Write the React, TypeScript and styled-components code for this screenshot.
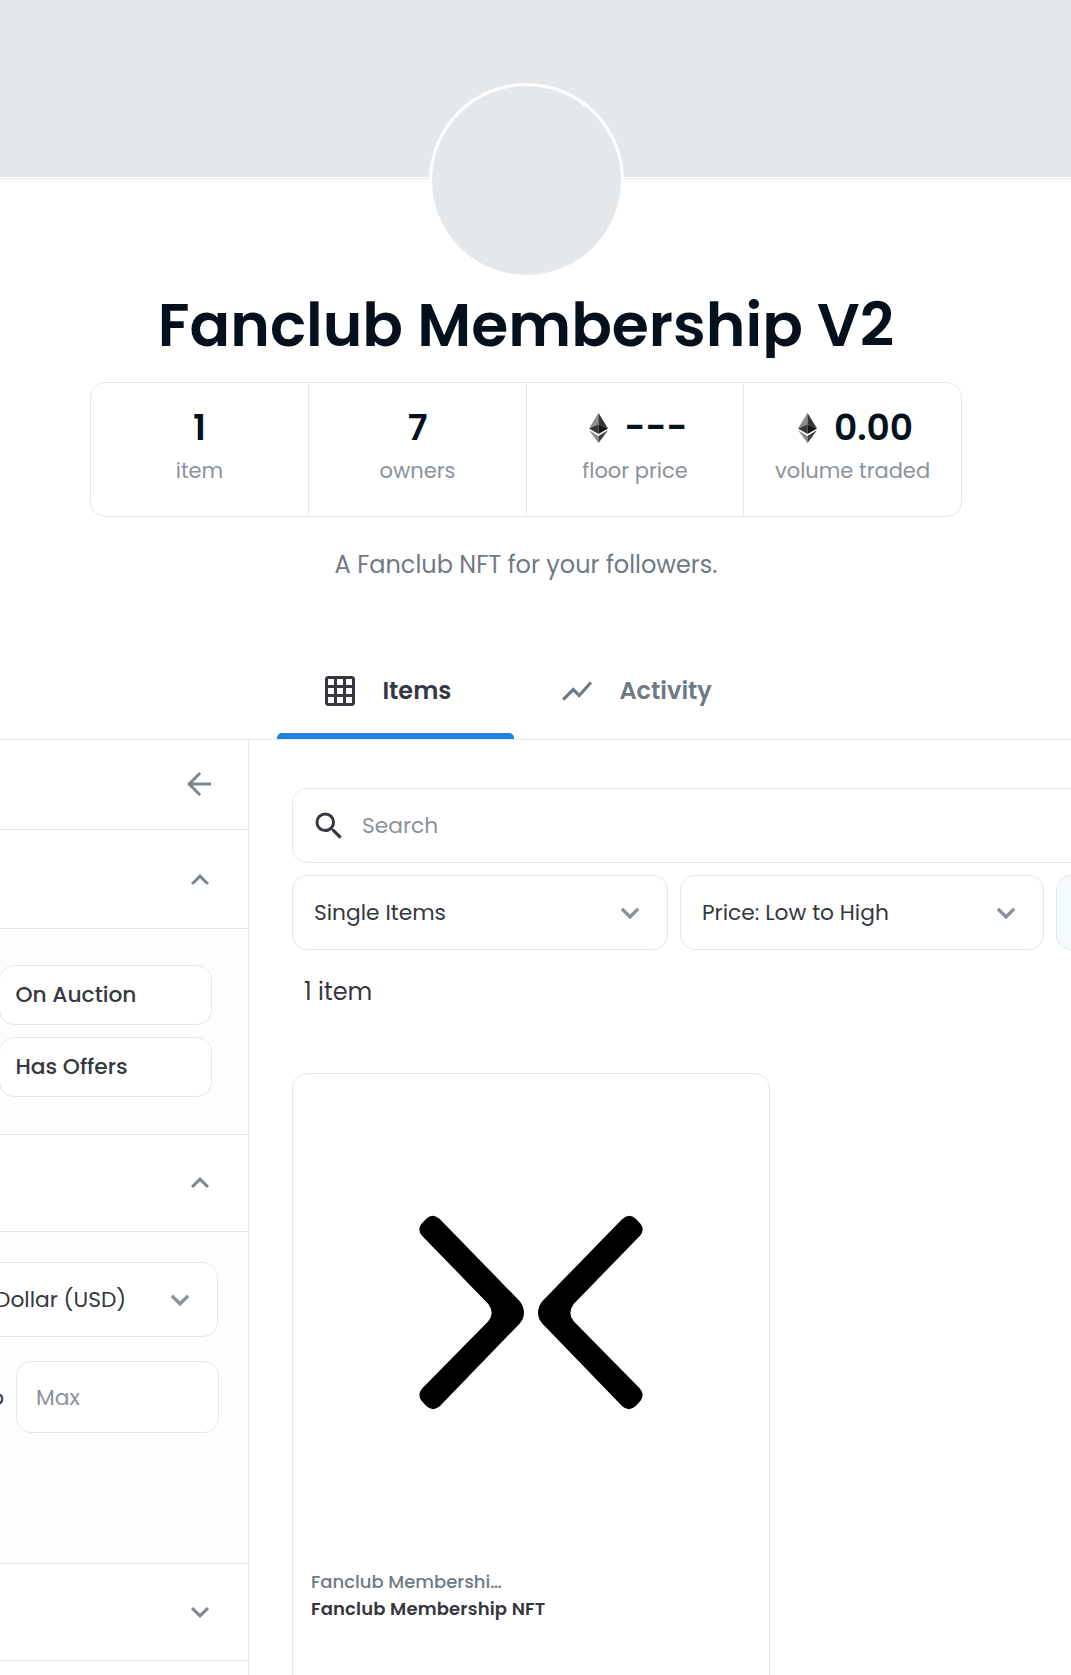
import React from "react";
import styled, { createGlobalStyle } from "styled-components";

const line = "#e5e8eb";
const ink = "#353840";
const navy = "#04111d";
const gray = "#707a83";
const softGray = "#8a939b";
const iconGray = "#7d868f";

const GlobalStyle = createGlobalStyle`
  *, *::before, *::after { box-sizing: border-box; }
  body {
    margin: 0;
    background: #fff;
    color: ${ink};
    font-family: Poppins, "Open Sans", sans-serif;
    overflow: hidden;
  }
`;

const Page = styled.div`
  height: 1675px;
  display: flex;
  flex-direction: column;
  overflow: hidden;
`;

const Banner = styled.div`
  flex: none;
  height: 179px;
  padding-bottom: 1px;
  border-bottom: 1px solid ${line};
  &::before {
    content: "";
    display: block;
    height: 100%;
    background: ${line};
  }
`;

const Header = styled.header`
  flex: none;
  width: 1052px;
  display: flex;
  flex-direction: column;
  align-items: center;
`;

const Avatar = styled.div`
  width: 195px;
  height: 195px;
  margin: -96px 0 0 1px;
  border: 3px solid #fff;
  border-radius: 50%;
  background: ${line};
  position: relative;
`;

const Title = styled.h1`
  margin: 14px 0 24px;
  font-size: 60px;
  font-weight: 600;
  line-height: 66px;
  color: ${navy};
  overflow: hidden;
`;

const Stats = styled.div`
  width: 872px;
  height: 135px;
  display: grid;
  grid-template-columns: 218px 218px 217px 1fr;
  border: 1px solid ${line};
  border-radius: 15px;
  padding-bottom: 1px;
`;

const Stat = styled.div`
  display: flex;
  flex-direction: column;
  align-items: center;
  padding-top: 18px;
  border-right: 1px solid ${line};
  &:last-child { border-right: 0; }
`;

const StatValue = styled.div`
  display: flex;
  align-items: center;
  gap: 17px;
  font-size: 36px;
  font-weight: 600;
  line-height: 54px;
  color: ${navy};
  svg { margin-left: 6px; }
`;

const StatLabel = styled.div`
  font-size: 21px;
  line-height: 32px;
  color: ${softGray};
`;

const Description = styled.p`
  margin: 30px 0 60px;
  font-size: 24px;
  line-height: 36px;
  color: ${gray};
`;

const Tabs = styled.nav`
  flex: none;
  height: 97px;
  padding-left: 277px;
  display: flex;
  border-bottom: 1px solid ${line};
`;

const Tab = styled.div<{ $active?: boolean }>`
  position: relative;
  width: 237px;
  padding-left: 45.4px;
  display: flex;
  align-items: center;
  gap: 24px;
  font-size: 24px;
  font-weight: 600;
  color: ${p => (p.$active ? ink : gray)};
  &::after {
    content: "";
    display: ${p => (p.$active ? "block" : "none")};
    position: absolute;
    left: 0;
    right: 0;
    bottom: 0;
    height: 6px;
    border-radius: 5px 5px 0 0;
    background: #2081e2;
  }
`;

const TabLabel = styled.span`
  margin-bottom: 2px;
`;

const Body = styled.div`
  flex: 1;
  min-height: 0;
  display: flex;
`;

const Sidebar = styled.aside`
  flex: none;
  width: 249px;
  border-right: 1px solid ${line};
  overflow: hidden;
`;

const SideRow = styled.div<{ $height: number; $pad?: string }>`
  height: ${p => p.$height}px;
  padding: ${p => p.$pad ?? "0 30px 0 0"};
  display: flex;
  align-items: center;
  justify-content: flex-end;
  border-bottom: 1px solid ${line};
  color: ${iconGray};
`;

const Panel = styled.div<{ $height: number; $top: number; $gap: number }>`
  height: ${p => p.$height}px;
  padding-top: ${p => p.$top}px;
  display: flex;
  flex-direction: column;
  gap: ${p => p.$gap}px;
  background: #fbfdff;
  border-bottom: 1px solid ${line};
`;

const StatusButton = styled.div`
  width: 213px;
  height: 60px;
  margin-left: -1px;
  padding: 0 0 2px 15.5px;
  display: flex;
  align-items: center;
  background: #fff;
  border: 1px solid ${line};
  border-radius: 15px;
  font-size: 21.75px;
  font-weight: 500;
`;

const Select = styled.div<{ $width: number; $offset?: number }>`
  flex: none;
  width: ${p => p.$width}px;
  height: 75px;
  margin-left: ${p => p.$offset ?? 0}px;
  padding: 0 19px 0 21px;
  display: flex;
  align-items: center;
  justify-content: space-between;
  background: #fff;
  border: 1px solid ${line};
  border-radius: 15px;
  font-size: 21.75px;
  white-space: nowrap;
  svg {
    color: ${softGray};
    stroke: ${softGray};
    stroke-width: 0.4px;
  }
`;

const PriceRow = styled.div`
  display: flex;
  align-items: center;
  margin-left: -18px;
`;

const To = styled.span`
  width: 34px;
  font-size: 22px;
`;

const Field = styled.div`
  width: 203px;
  height: 72px;
  padding-left: 19px;
  display: flex;
  align-items: center;
  background: #fff;
  border: 1px solid ${line};
  border-radius: 15px;
  font-size: 21.75px;
  color: ${softGray};
`;

const Main = styled.main`
  flex: 1;
  min-width: 0;
  padding: 48px 0 0 43px;
  overflow: hidden;
`;

const Search = styled.div`
  width: 900px;
  height: 75px;
  padding-left: 18px;
  display: flex;
  align-items: center;
  gap: 15px;
  border: 1px solid ${line};
  border-radius: 15px;
  font-size: 21.75px;
  color: ${softGray};
  svg { color: ${ink}; }
`;

const Filters = styled.div`
  margin-top: 12px;
  display: flex;
  gap: 12px;
`;

const ViewToggle = styled.div`
  flex: none;
  width: 140px;
  height: 75px;
  background: #f3fbfe;
  border: 1px solid ${line};
  border-radius: 15px;
`;

const Count = styled.div`
  margin: 24px 0 63px 12px;
  font-size: 24px;
  line-height: 36px;
`;

const Card = styled.article`
  width: 478px;
  height: 700px;
  border: 1px solid ${line};
  border-radius: 15px;
`;

const Art = styled.svg`
  display: block;
  width: 476px;
  height: 476px;
`;

const CardInfo = styled.div`
  padding: 18px 18px 0;
  font-size: 18px;
  line-height: 27px;
`;

const Collection = styled.div`
  font-weight: 500;
  color: ${gray};
`;

const ItemName = styled.div`
  font-weight: 600;
  letter-spacing: 0.15px;
`;

const paths = {
  grid: "M20 2H4c-1.1 0-2 .9-2 2v16c0 1.1.9 2 2 2h16c1.1 0 2-.9 2-2V4c0-1.1-.9-2-2-2zM8 20H4v-4h4v4zm0-6H4v-4h4v4zm0-6H4V4h4v4zm6 12h-4v-4h4v4zm0-6h-4v-4h4v4zm0-6h-4V4h4v4zm6 12h-4v-4h4v4zm0-6h-4v-4h4v4zm0-6h-4V4h4v4z",
  chart: "M3.5 18.49l6-6.01 4 4L22 6.92l-1.41-1.41-7.09 7.97-4-4L2 16.99z",
  back: "M20 11H7.83l5.59-5.59L12 4l-8 8 8 8 1.41-1.41L7.83 13H20v-2z",
  up: "M12 8l-6 6 1.41 1.41L12 10.83l4.59 4.58L18 14z",
  down: "M16.59 8.59L12 13.17 7.41 8.59 6 10l6 6 6-6z",
  search: "M15.5 14h-.79l-.28-.27A6.471 6.471 0 0 0 16 9.5 6.5 6.5 0 1 0 9.5 16c1.61 0 3.09-.59 4.23-1.57l.27.28v.79l5 4.99L20.49 19l-4.99-5zm-6 0C7.01 14 5 11.99 5 9.5S7.01 5 9.5 5 14 7.01 14 9.5 11.99 14 9.5 14z",
};

function Icon({ name }: { name: keyof typeof paths }) {
  return (
    <svg width="36" height="36" viewBox="0 0 24 24" fill="currentColor">
      <path d={paths[name]} />
    </svg>
  );
}

function Eth() {
  return (
    <svg width="19" height="30" viewBox="0 0 19 30">
      <path d="M9.5 0L0 15.5l9.5-4.3z" fill="#8c8c8c" />
      <path d="M9.5 0L19 15.5l-9.5-4.3z" fill="#343434" />
      <path d="M0 15.5l9.5-4.3V21z" fill="#393939" />
      <path d="M19 15.5l-9.5-4.3V21z" fill="#141414" />
      <path d="M0 17.3L9.5 23v7z" fill="#8c8c8c" />
      <path d="M19 17.3L9.5 23v7z" fill="#3c3c3b" />
    </svg>
  );
}

const chevron =
  "M147 145.3L226.3 226.7Q231 232 231 238.5T226.3 250L147 332Q140 338.5 133 331.7L128.3 326.5Q124 320.5 129.3 314.3L195.3 247.3Q202 238.7 195.3 230L129 161.7Q124 156 128.3 150L133 145Q140 138.2 147 145.3Z";

const stats = [
  { value: "1", label: "item" },
  { value: "7", label: "owners" },
  { value: "---", label: "floor price", eth: true },
  { value: "0.00", label: "volume traded", eth: true },
];

export default function App() {
  return (
    <Page>
      <GlobalStyle />
      <Banner />
      <Header>
        <Avatar />
        <Title>Fanclub Membership V2</Title>
        <Stats>
          {stats.map(s => (
            <Stat key={s.label}>
              <StatValue>
                {s.eth && <Eth />}
                <span>{s.value}</span>
              </StatValue>
              <StatLabel>{s.label}</StatLabel>
            </Stat>
          ))}
        </Stats>
        <Description>A Fanclub NFT for your followers.</Description>
      </Header>
      <Tabs>
        <Tab $active>
          <Icon name="grid" />
          <TabLabel>Items</TabLabel>
        </Tab>
        <Tab>
          <Icon name="chart" />
          <TabLabel>Activity</TabLabel>
        </Tab>
      </Tabs>
      <Body>
        <Sidebar>
          <SideRow $height={90} $pad="0 31.5px 1px 0"><Icon name="back" /></SideRow>
          <SideRow $height={99} $pad="2px 30px 0 0"><Icon name="up" /></SideRow>
          <Panel $height={206} $top={36} $gap={12}>
            <StatusButton>On Auction</StatusButton>
            <StatusButton>Has Offers</StatusButton>
          </Panel>
          <SideRow $height={97}><Icon name="up" /></SideRow>
          <Panel $height={332} $top={30} $gap={24}>
            <Select $width={245} $offset={-27}>
              Dollar (USD)
              <Icon name="down" />
            </Select>
            <PriceRow>
              <To>to</To>
              <Field>Max</Field>
            </PriceRow>
          </Panel>
          <SideRow $height={97}><Icon name="down" /></SideRow>
        </Sidebar>
        <Main>
          <Search>
            <Icon name="search" />
            Search
          </Search>
          <Filters>
            <Select $width={376}>
              Single Items
              <Icon name="down" />
            </Select>
            <Select $width={364}>
              Price: Low to High
              <Icon name="down" />
            </Select>
            <ViewToggle />
          </Filters>
          <Count>1 item</Count>
          <Card>
            <Art viewBox="0 0 476 476">
              <path d={chevron} />
              <path d={chevron} transform="matrix(-1 0 0 1 476 0)" />
            </Art>
            <CardInfo>
              <Collection>Fanclub Membershi…</Collection>
              <ItemName>Fanclub Membership NFT</ItemName>
            </CardInfo>
          </Card>
        </Main>
      </Body>
    </Page>
  );
}
